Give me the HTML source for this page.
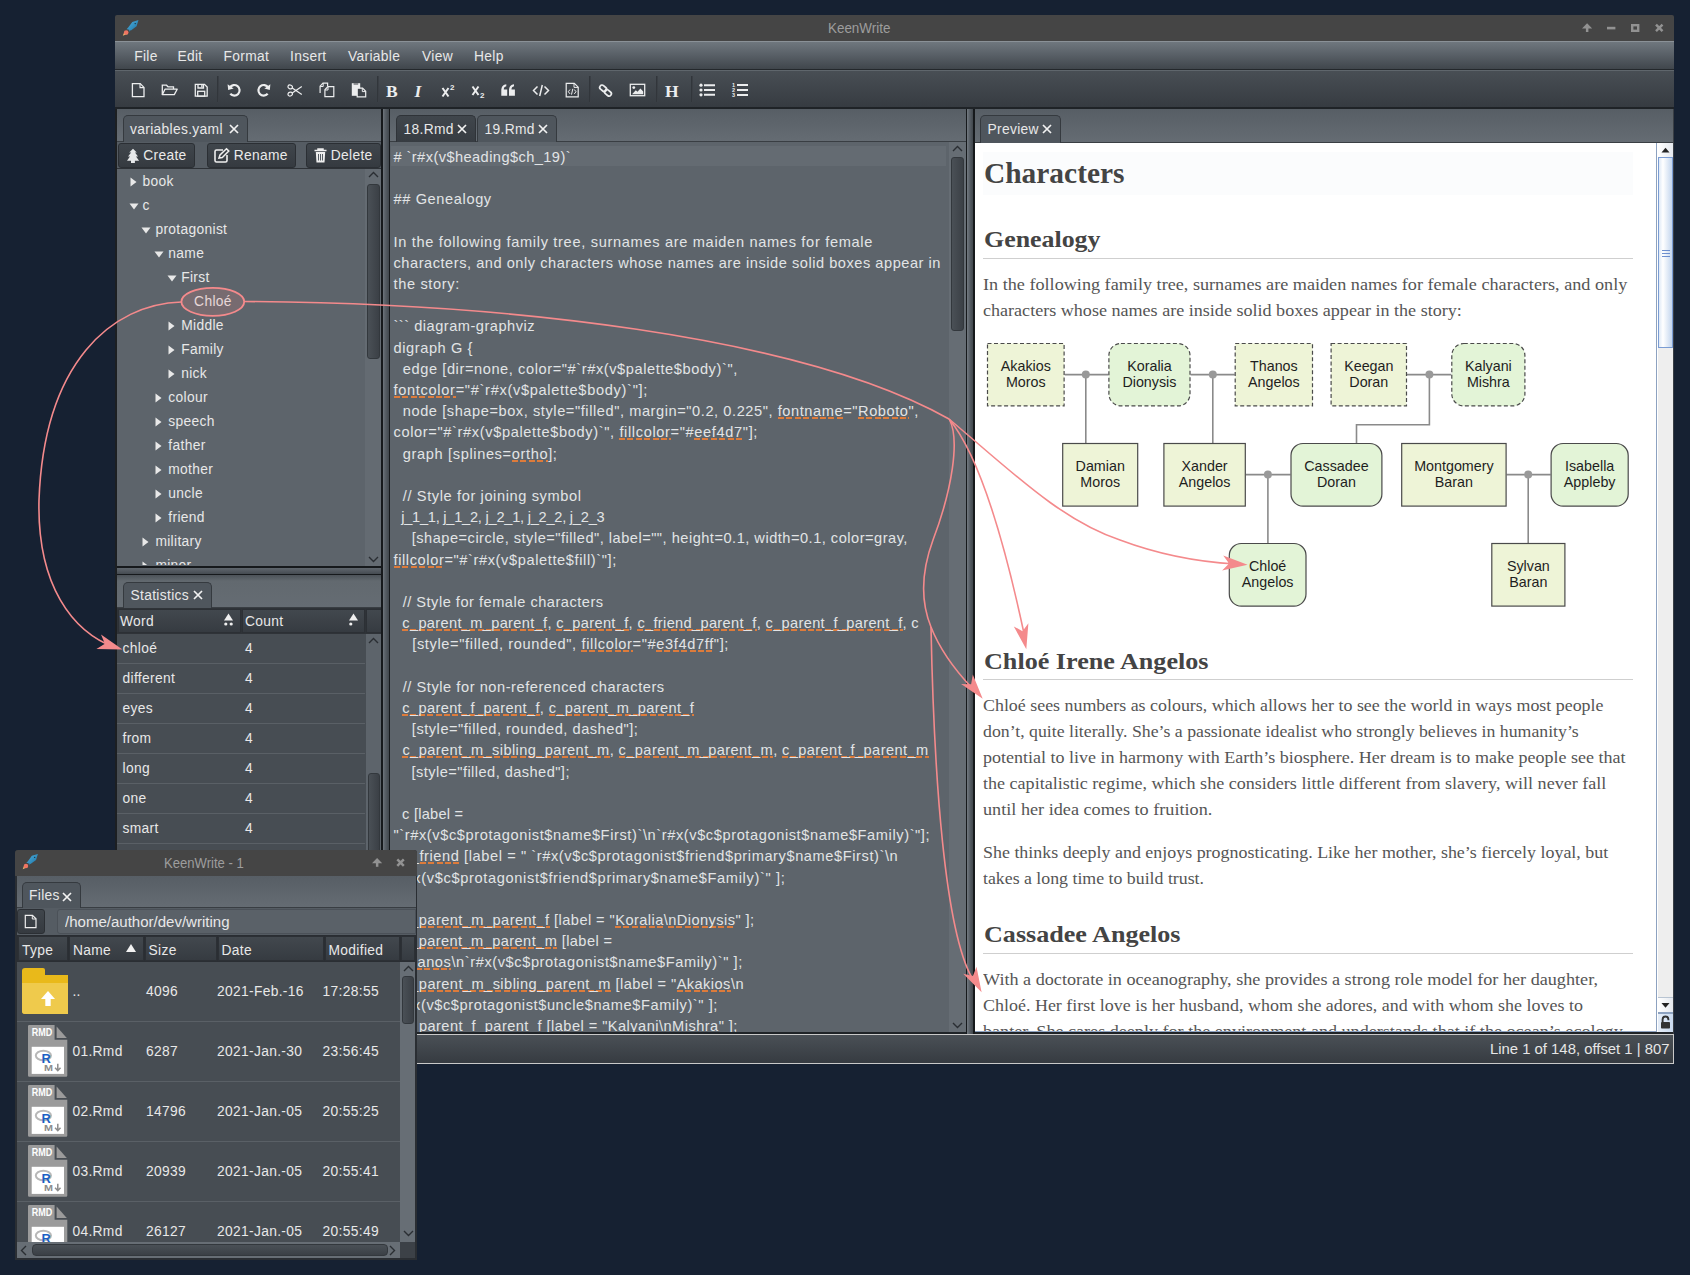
<!DOCTYPE html><html><head><meta charset="utf-8"><style>
*{margin:0;padding:0;box-sizing:border-box}
html,body{width:1690px;height:1275px;overflow:hidden;background:#162132;position:relative}
.a{position:absolute}
.t{position:absolute;white-space:pre;line-height:1}
.ed{font-family:"Liberation Sans",sans-serif;font-size:14.6px;color:#e2e4e6}
.u{background:repeating-linear-gradient(90deg,#dd7b3b 0 6px,transparent 6px 8.4px) 0 100%/100% 2px no-repeat}
svg{position:absolute;overflow:visible}
</style></head><body>
<div class="a" style="left:115px;top:15px;width:1559px;height:26px;background:#454545;border-radius:2px 2px 0 0"></div>
<div class="t" style="left:828.1px;top:21.15px;font-size:14px;color:#9d9d9d;font-family:'Liberation Sans',sans-serif;transform:scaleX(0.9584);transform-origin:0 0;">KeenWrite</div>
<svg style="left:118px;top:16px" width="24" height="22"><defs><linearGradient id="rg118" x1="0" y1="0" x2="1" y2="1"><stop offset="0" stop-color="#4fb3e3"/><stop offset="1" stop-color="#1a6f9f"/></linearGradient></defs><polygon points="6.50,15.50 4.80,19.80 8.50,18.20 9.50,18.50" fill="#f0b56a"/><circle cx="8.20" cy="16.50" r="2.30" fill="#f07563"/><polygon points="20.50,4.00 14.30,6.00 10.20,11.60 8.60,13.30 10.60,13.40 11.70,16.10 11.80,14.30 12.90,14.40 18.60,10.20" fill="url(#rg118)"/><circle cx="17.20" cy="7.60" r="0.70" fill="#1b2a33"/></svg>
<svg style="left:1578px;top:20px" width="92" height="16"><path d="M4 8.5L9.1 3.2L14.2 8.5Z" fill="#929292"/><rect x="7.9" y="7" width="2.5" height="5" fill="#929292"/><rect x="29" y="6.8" width="8.4" height="2.6" fill="#929292"/><rect x="54.2" y="5.2" width="6" height="5.6" stroke="#929292" stroke-width="2.4" fill="none"/><path d="M78 4.6L84.5 11.2M84.5 4.6L78 11.2" stroke="#929292" stroke-width="2.5"/></svg>
<div class="a" style="left:115px;top:41px;width:1559px;height:29px;background:linear-gradient(#6f777e,#5a6168 45%,#40464c);border-top:1px solid #8a9197;border-bottom:1px solid #24282c"></div>
<div class="t" style="left:134.2px;top:50.32px;font-size:13.8px;color:#e8e8e8;font-family:'Liberation Sans',sans-serif;letter-spacing:0.33px;">File</div>
<div class="t" style="left:177.4px;top:50.32px;font-size:13.8px;color:#e8e8e8;font-family:'Liberation Sans',sans-serif;letter-spacing:0.33px;">Edit</div>
<div class="t" style="left:223.5px;top:50.32px;font-size:13.8px;color:#e8e8e8;font-family:'Liberation Sans',sans-serif;letter-spacing:0.33px;">Format</div>
<div class="t" style="left:290px;top:50.32px;font-size:13.8px;color:#e8e8e8;font-family:'Liberation Sans',sans-serif;letter-spacing:0.33px;">Insert</div>
<div class="t" style="left:348px;top:50.32px;font-size:13.8px;color:#e8e8e8;font-family:'Liberation Sans',sans-serif;letter-spacing:0.33px;">Variable</div>
<div class="t" style="left:422px;top:50.32px;font-size:13.8px;color:#e8e8e8;font-family:'Liberation Sans',sans-serif;letter-spacing:0.33px;">View</div>
<div class="t" style="left:474px;top:50.32px;font-size:13.8px;color:#e8e8e8;font-family:'Liberation Sans',sans-serif;letter-spacing:0.33px;">Help</div>
<div class="a" style="left:115px;top:70px;width:1559px;height:38px;background:linear-gradient(#484e54,#363b41);border-top:1px solid #5f666c"></div>
<div class="a" style="left:115px;top:107px;width:1559px;height:2px;background:#1f2327"></div>
<div class="a" style="left:115px;top:109px;width:1559px;height:926px;background:#3a3f45;border-left:2px solid #1c1f22"></div>
<svg style="left:131px;top:82px" width="15" height="16" viewBox="0 0 15 16"><path d="M1.4 1.6H9.2L13 5.4V14.6H1.4Z" stroke="#ecedee" fill="none" stroke-width="1.3"/><path d="M9 1.6V5.6H13" stroke="#ecedee" fill="none" stroke-width="1.1"/></svg>
<svg style="left:161px;top:83px" width="18" height="14" viewBox="0 0 18 14"><path d="M1.3 11.5V2.2H5.5L7 3.8H12.5V6" stroke="#ecedee" fill="none" stroke-width="1.3"/><path d="M1.3 11.6L4 6.2H16.2L13.3 11.6Z" stroke="#ecedee" fill="none" stroke-width="1.3" stroke-linejoin="round"/></svg>
<svg style="left:194px;top:83px" width="15" height="15" viewBox="0 0 15 15"><path d="M1.3 1.3H10.5L13.2 4V13.2H1.3Z" stroke="#ecedee" fill="none" stroke-width="1.3"/><path d="M4 1.3V5H9.5V1.3" stroke="#ecedee" fill="none" stroke-width="1.3"/><rect x="3.7" y="8.3" width="7" height="4.9" stroke="#ecedee" fill="none" stroke-width="1.3"/><rect x="7.2" y="2" width="1.4" height="2.3" fill="#ecedee"/></svg>
<div class="a" style="left:217px;top:76px;width:2px;height:26px;background:linear-gradient(90deg,#2d3136,#3f444a)"></div>
<div class="a" style="left:377px;top:76px;width:2px;height:26px;background:linear-gradient(90deg,#2d3136,#3f444a)"></div>
<div class="a" style="left:589px;top:76px;width:2px;height:26px;background:linear-gradient(90deg,#2d3136,#3f444a)"></div>
<div class="a" style="left:656px;top:76px;width:2px;height:26px;background:linear-gradient(90deg,#2d3136,#3f444a)"></div>
<div class="a" style="left:691px;top:76px;width:2px;height:26px;background:linear-gradient(90deg,#2d3136,#3f444a)"></div>
<svg style="left:227px;top:83px" width="14" height="14" viewBox="0 0 14 14"><path d="M2.8 4.5A5.3 5.3 0 1 1 3.3 10.8" stroke="#ecedee" fill="none" stroke-width="2.2"/><path d="M0.6 1.2L1.2 7L6.6 5.4Z" fill="#ecedee"/></svg>
<svg style="left:257px;top:83px" width="14" height="14" viewBox="0 0 14 14"><path d="M11.2 4.5A5.3 5.3 0 1 0 10.7 10.8" stroke="#ecedee" fill="none" stroke-width="2.2"/><path d="M13.4 1.2L12.8 7L7.4 5.4Z" fill="#ecedee"/></svg>
<svg style="left:287px;top:84px" width="16" height="13" viewBox="0 0 16 13"><ellipse cx="3.2" cy="2.9" rx="2.3" ry="1.9" transform="rotate(25 3.2 2.9)" stroke="#ecedee" fill="none" stroke-width="1.2"/><ellipse cx="3.2" cy="10.1" rx="2.3" ry="1.9" transform="rotate(-25 3.2 10.1)" stroke="#ecedee" fill="none" stroke-width="1.2"/><path d="M5.2 4L14.8 10.5M5.2 9L14.8 2.5" stroke="#ecedee" fill="none" stroke-width="1.2"/></svg>
<svg style="left:319px;top:82px" width="16" height="16" viewBox="0 0 16 16"><path d="M1.1 11V4.2L4 1.1H8.6V4" stroke="#ecedee" fill="none" stroke-width="1.2"/><path d="M5.9 14.7V7.8L8.8 4.7H14.8V14.7Z" stroke="#ecedee" fill="none" stroke-width="1.2"/><path d="M1.2 4.5H4.2V1.2M6 8H9V5" stroke="#ecedee" fill="none" stroke-width="1"/></svg>
<svg style="left:351px;top:82px" width="16" height="16" viewBox="0 0 16 16"><rect x="0.8" y="1.2" width="8.4" height="12.6" fill="#ecedee"/><path d="M2.6 2H7.2" stroke="#3e4349" stroke-width="1"/><path d="M6.2 14.8V6.2H11.6L14.7 9.3V14.8Z" fill="#3e4349" stroke="#ecedee" stroke-width="1.2"/><path d="M11.3 6.2V9.6H14.7" stroke="#ecedee" fill="none" stroke-width="1"/></svg>
<div class="t" style="left:386px;top:82.84px;font-size:17.5px;color:#ecedee;font-family:'Liberation Serif',serif;font-weight:bold;">B</div>
<div class="t" style="left:414.5px;top:82.84px;font-size:17.5px;color:#ecedee;font-family:'Liberation Serif',serif;font-weight:bold;font-style:italic;">I</div>
<svg style="left:441px;top:82px" width="15" height="16" viewBox="0 0 15 16"><path d="M1.5 6L7.5 14.5M7.5 6L1.5 14.5" stroke="#ecedee" fill="none" stroke-width="2"/><text x="9" y="7.5" font-family="Liberation Sans" font-weight="bold" font-size="8" fill="#ecedee">2</text></svg>
<svg style="left:471px;top:82px" width="15" height="17" viewBox="0 0 15 17"><path d="M1.5 4.5L7.5 13M7.5 4.5L1.5 13" stroke="#ecedee" fill="none" stroke-width="2"/><text x="9" y="16" font-family="Liberation Sans" font-weight="bold" font-size="8" fill="#ecedee">2</text></svg>
<svg style="left:500px;top:83px" width="17" height="14" viewBox="0 0 17 14"><path d="M1.3 12.7V7.5C1.3 3.5 3.5 1.4 6.3 1.2V3.3C4.6 3.6 3.8 4.8 3.8 6.5H7.2V12.7Z" fill="#ecedee"/><path d="M9 12.7V7.5C9 3.5 11.2 1.4 14 1.2V3.3C12.3 3.6 11.5 4.8 11.5 6.5H14.9V12.7Z" fill="#ecedee"/></svg>
<svg style="left:532px;top:84px" width="18" height="13" viewBox="0 0 18 13"><path d="M5.5 2.5L1.5 6.5L5.5 10.5M12.5 2.5L16.5 6.5L12.5 10.5M10.3 1L7.7 12" stroke="#ecedee" fill="none" stroke-width="1.5"/></svg>
<svg style="left:565px;top:82px" width="15" height="16" viewBox="0 0 15 16"><path d="M1.2 1.3H9.3L13.2 5.2V14.8H1.2Z" stroke="#ecedee" fill="none" stroke-width="1.2"/><path d="M9 1.3V5.4H13.2" stroke="#ecedee" fill="none" stroke-width="1"/><path d="M5 7.5L3.3 9.7L5 11.9M9.3 7.5L11 9.7L9.3 11.9M7.8 6.8L6.5 12.6" stroke="#ecedee" fill="none" stroke-width="1"/></svg>
<svg style="left:598px;top:83px" width="16" height="15" viewBox="0 0 16 15"><rect x="1.4" y="3" width="7.5" height="4.6" rx="2.3" transform="rotate(40 5.1 5.3)" stroke="#ecedee" fill="none" stroke-width="1.7"/><rect x="6.2" y="7.5" width="7.5" height="4.6" rx="2.3" transform="rotate(40 9.9 9.8)" stroke="#ecedee" fill="none" stroke-width="1.7"/></svg>
<svg style="left:629px;top:83px" width="17" height="14" viewBox="0 0 17 14"><rect x="1.3" y="1.3" width="14.4" height="11.4" stroke="#ecedee" fill="none" stroke-width="1.3"/><circle cx="4.8" cy="4.6" r="1.4" fill="#ecedee"/><path d="M3 11.2L6.8 7.2L8.5 8.8L11.4 5.4L14.2 8.5V11.2Z" fill="#ecedee"/></svg>
<div class="t" style="left:665px;top:82.84px;font-size:17.5px;color:#ecedee;font-family:'Liberation Serif',serif;font-weight:bold;">H</div>
<svg style="left:699px;top:83px" width="17" height="14" viewBox="0 0 17 14"><circle cx="2" cy="2.2" r="1.6" fill="#ecedee"/><circle cx="2" cy="7" r="1.6" fill="#ecedee"/><circle cx="2" cy="11.8" r="1.6" fill="#ecedee"/><path d="M5 2.2H16M5 7H16M5 11.8H16" stroke="#ecedee" fill="none" stroke-width="2.1"/></svg>
<svg style="left:732px;top:82px" width="17" height="16" viewBox="0 0 17 16"><text x="0" y="5" font-family="Liberation Sans" font-size="5.5" font-weight="bold" fill="#ecedee">1</text><text x="0" y="10" font-family="Liberation Sans" font-size="5.5" font-weight="bold" fill="#ecedee">2</text><text x="0" y="15" font-family="Liberation Sans" font-size="5.5" font-weight="bold" fill="#ecedee">3</text><path d="M5 3H16M5 8H16M5 13H16" stroke="#ecedee" fill="none" stroke-width="2.1"/></svg>
<div class="a" style="left:115px;top:1034px;width:1559px;height:30px;background:linear-gradient(#4a5056,#363b41);border-top:1px solid #c9c9c9;border-right:1px solid #c9c9c9;border-bottom:1px solid #c9c9c9"></div>
<div class="t" style="left:1489.5px;top:1043.32px;font-size:13.8px;color:#e6e6e6;font-family:'Liberation Sans',sans-serif;transform:scaleX(1.0766);transform-origin:0 0;">Line 1 of 148, offset 1 | 807</div>
<div class="a" style="left:117px;top:109px;width:265px;height:33px;background:linear-gradient(#575e65,#656c73);border-bottom:1px solid #393e43"></div>
<div class="a" style="left:123px;top:115px;width:125px;height:27px;background:#4f565d;border:1px solid #353a3f;border-bottom:none;border-radius:5px 5px 0 0"></div>
<div class="t" style="left:130px;top:123.32px;font-size:13.8px;color:#e8e8e8;font-family:'Liberation Sans',sans-serif;letter-spacing:0.33px;">variables.yaml</div>
<svg style="left:228px;top:123px" width="12" height="12"><path d="M2 2L10 10M10 2L2 10" stroke="#f2f2f2" stroke-width="1.7"/></svg>
<div class="a" style="left:117px;top:142px;width:265px;height:27px;background:#555c63"></div>
<div class="a" style="left:118px;top:143px;width:77px;height:25px;background:linear-gradient(#40464c,#353a40);border:1px solid #2b2f34;border-radius:3px"></div>
<div class="t" style="left:143.2px;top:148.92px;font-size:13.8px;color:#eaeaea;font-family:'Liberation Sans',sans-serif;letter-spacing:0.33px;">Create</div>
<div class="a" style="left:207px;top:143px;width:89px;height:25px;background:linear-gradient(#40464c,#353a40);border:1px solid #2b2f34;border-radius:3px"></div>
<div class="t" style="left:233.7px;top:148.92px;font-size:13.8px;color:#eaeaea;font-family:'Liberation Sans',sans-serif;letter-spacing:0.33px;">Rename</div>
<div class="a" style="left:306px;top:143px;width:75px;height:25px;background:linear-gradient(#40464c,#353a40);border:1px solid #2b2f34;border-radius:3px"></div>
<div class="t" style="left:330.7px;top:148.92px;font-size:13.8px;color:#eaeaea;font-family:'Liberation Sans',sans-serif;letter-spacing:0.33px;">Delete</div>
<svg style="left:126px;top:148px" width="14" height="16"><path d="M7.0 0.8 L10.8 4.6 L9.0 4.6 L12.0 8.5 L10.0 8.5 L13.1 12.7 L8.9 12.7 L8.9 14.9 L5.0 14.9 L5.0 12.7 L1.0 12.7 L4.0 8.5 L2.0 8.5 L5.2 4.6 L3.2 4.6Z" fill="#e6e8ea"/></svg>
<svg style="left:214px;top:148px" width="16" height="15"><path d="M9 2H2.5C1.7 2 1 2.7 1 3.5V12.5C1 13.3 1.7 14 2.5 14H11.5C12.3 14 13 13.3 13 12.5V7" fill="none" stroke="#eee" stroke-width="1.6"/><path d="M5 10L6 7L12.5 0.8L14.8 3.1L8.3 9.5Z" fill="none" stroke="#eee" stroke-width="1.5"/></svg>
<svg style="left:314px;top:148px" width="13" height="15"><path d="M0.5 2.5H12.5M4 2.5V1H9V2.5" stroke="#eee" stroke-width="1.5" fill="none"/><path d="M1.8 4H11.2L10.5 14.5H2.5Z" fill="#eee"/><path d="M4.5 6V12.5M6.5 6V12.5M8.5 6V12.5" stroke="#555c63" stroke-width="1"/></svg>
<div class="a" style="left:117px;top:168px;width:265px;height:400px;background:#5d646b;border-top:1px solid #2e3237;border-bottom:2px solid #16191c"></div>
<div class="a" style="left:365px;top:169px;width:17px;height:397px;background:#646b72"></div>
<svg style="left:367px;top:170px" width="13" height="9"><path d="M2 7L6.5 2.5L11 7" stroke="#2a2e33" stroke-width="1.4" fill="none"/></svg>
<div class="a" style="left:367px;top:184px;width:13px;height:175px;background:linear-gradient(90deg,#4a5056,#3b4046);border:1px solid #33383d;border-radius:3px"></div>
<svg style="left:367px;top:555px" width="13" height="9"><path d="M2 2L6.5 6.5L11 2" stroke="#2a2e33" stroke-width="1.4" fill="none"/></svg>
<div class="a" style="left:117px;top:169px;width:248px;height:396px;overflow:hidden">
<div class="t" style="left:25.5px;top:6.02px;font-size:13.8px;color:#e8e8e8;font-family:'Liberation Sans',sans-serif;letter-spacing:0.33px;">book</div>
<svg style="left:12.5px;top:8.199999999999989px" width="8" height="10"><path d="M0.5 0.5L6.5 5L0.5 9.5Z" fill="#e8e8e8"/></svg>
<div class="t" style="left:25.5px;top:30.02px;font-size:13.8px;color:#e8e8e8;font-family:'Liberation Sans',sans-serif;letter-spacing:0.33px;">c</div>
<svg style="left:11.5px;top:33.69999999999999px" width="10" height="8"><path d="M0.5 0.5H9.5L5 6.5Z" fill="#e8e8e8"/></svg>
<div class="t" style="left:38.400000000000006px;top:54.02px;font-size:13.8px;color:#e8e8e8;font-family:'Liberation Sans',sans-serif;letter-spacing:0.33px;">protagonist</div>
<svg style="left:24.400000000000006px;top:57.69999999999999px" width="10" height="8"><path d="M0.5 0.5H9.5L5 6.5Z" fill="#e8e8e8"/></svg>
<div class="t" style="left:51.30000000000001px;top:78.02px;font-size:13.8px;color:#e8e8e8;font-family:'Liberation Sans',sans-serif;letter-spacing:0.33px;">name</div>
<svg style="left:37.30000000000001px;top:81.69999999999999px" width="10" height="8"><path d="M0.5 0.5H9.5L5 6.5Z" fill="#e8e8e8"/></svg>
<div class="t" style="left:64.19999999999999px;top:102.02px;font-size:13.8px;color:#e8e8e8;font-family:'Liberation Sans',sans-serif;letter-spacing:0.33px;">First</div>
<svg style="left:50.19999999999999px;top:105.69999999999999px" width="10" height="8"><path d="M0.5 0.5H9.5L5 6.5Z" fill="#e8e8e8"/></svg>
<div class="t" style="left:77.1px;top:126.02px;font-size:13.8px;color:#e8e8e8;font-family:'Liberation Sans',sans-serif;letter-spacing:0.33px;">Chloé</div>
<div class="t" style="left:64.19999999999999px;top:150.02px;font-size:13.8px;color:#e8e8e8;font-family:'Liberation Sans',sans-serif;letter-spacing:0.33px;">Middle</div>
<svg style="left:51.19999999999999px;top:152.2px" width="8" height="10"><path d="M0.5 0.5L6.5 5L0.5 9.5Z" fill="#e8e8e8"/></svg>
<div class="t" style="left:64.19999999999999px;top:174.02px;font-size:13.8px;color:#e8e8e8;font-family:'Liberation Sans',sans-serif;letter-spacing:0.33px;">Family</div>
<svg style="left:51.19999999999999px;top:176.2px" width="8" height="10"><path d="M0.5 0.5L6.5 5L0.5 9.5Z" fill="#e8e8e8"/></svg>
<div class="t" style="left:64.19999999999999px;top:198.02px;font-size:13.8px;color:#e8e8e8;font-family:'Liberation Sans',sans-serif;letter-spacing:0.33px;">nick</div>
<svg style="left:51.19999999999999px;top:200.2px" width="8" height="10"><path d="M0.5 0.5L6.5 5L0.5 9.5Z" fill="#e8e8e8"/></svg>
<div class="t" style="left:51.30000000000001px;top:222.02px;font-size:13.8px;color:#e8e8e8;font-family:'Liberation Sans',sans-serif;letter-spacing:0.33px;">colour</div>
<svg style="left:38.30000000000001px;top:224.2px" width="8" height="10"><path d="M0.5 0.5L6.5 5L0.5 9.5Z" fill="#e8e8e8"/></svg>
<div class="t" style="left:51.30000000000001px;top:246.02px;font-size:13.8px;color:#e8e8e8;font-family:'Liberation Sans',sans-serif;letter-spacing:0.33px;">speech</div>
<svg style="left:38.30000000000001px;top:248.2px" width="8" height="10"><path d="M0.5 0.5L6.5 5L0.5 9.5Z" fill="#e8e8e8"/></svg>
<div class="t" style="left:51.30000000000001px;top:270.02px;font-size:13.8px;color:#e8e8e8;font-family:'Liberation Sans',sans-serif;letter-spacing:0.33px;">father</div>
<svg style="left:38.30000000000001px;top:272.2px" width="8" height="10"><path d="M0.5 0.5L6.5 5L0.5 9.5Z" fill="#e8e8e8"/></svg>
<div class="t" style="left:51.30000000000001px;top:294.02px;font-size:13.8px;color:#e8e8e8;font-family:'Liberation Sans',sans-serif;letter-spacing:0.33px;">mother</div>
<svg style="left:38.30000000000001px;top:296.2px" width="8" height="10"><path d="M0.5 0.5L6.5 5L0.5 9.5Z" fill="#e8e8e8"/></svg>
<div class="t" style="left:51.30000000000001px;top:318.02px;font-size:13.8px;color:#e8e8e8;font-family:'Liberation Sans',sans-serif;letter-spacing:0.33px;">uncle</div>
<svg style="left:38.30000000000001px;top:320.2px" width="8" height="10"><path d="M0.5 0.5L6.5 5L0.5 9.5Z" fill="#e8e8e8"/></svg>
<div class="t" style="left:51.30000000000001px;top:342.02px;font-size:13.8px;color:#e8e8e8;font-family:'Liberation Sans',sans-serif;letter-spacing:0.33px;">friend</div>
<svg style="left:38.30000000000001px;top:344.20000000000005px" width="8" height="10"><path d="M0.5 0.5L6.5 5L0.5 9.5Z" fill="#e8e8e8"/></svg>
<div class="t" style="left:38.400000000000006px;top:366.02px;font-size:13.8px;color:#e8e8e8;font-family:'Liberation Sans',sans-serif;letter-spacing:0.33px;">military</div>
<svg style="left:25.400000000000006px;top:368.20000000000005px" width="8" height="10"><path d="M0.5 0.5L6.5 5L0.5 9.5Z" fill="#e8e8e8"/></svg>
<div class="t" style="left:38.400000000000006px;top:390.02px;font-size:13.8px;color:#e8e8e8;font-family:'Liberation Sans',sans-serif;letter-spacing:0.33px;">minor</div>
<svg style="left:25.400000000000006px;top:392.20000000000005px" width="8" height="10"><path d="M0.5 0.5L6.5 5L0.5 9.5Z" fill="#e8e8e8"/></svg>
</div>
<div class="a" style="left:117px;top:568px;width:265px;height:7px;background:linear-gradient(#5f666d,#454b51);border-bottom:1px solid #16191c"></div>
<div class="a" style="left:117px;top:575px;width:265px;height:33px;background:linear-gradient(#4c5258,#62696f 6px,#656c73);border-bottom:1px solid #393e43"></div>
<div class="a" style="left:123px;top:582px;width:89px;height:26px;background:#4f565d;border:1px solid #353a3f;border-bottom:none;border-radius:5px 5px 0 0"></div>
<div class="t" style="left:130.5px;top:589.32px;font-size:13.8px;color:#e8e8e8;font-family:'Liberation Sans',sans-serif;letter-spacing:0.33px;">Statistics</div>
<svg style="left:192px;top:589px" width="12" height="12"><path d="M2 2L10 10M10 2L2 10" stroke="#f2f2f2" stroke-width="1.7"/></svg>
<div class="a" style="left:117px;top:608px;width:265px;height:26px;background:#2f3338"></div>
<div class="a" style="left:118px;top:609px;width:123px;height:24px;background:linear-gradient(#42484e,#363b41);border:1px solid #2c3035"></div>
<div class="a" style="left:242px;top:609px;width:123px;height:24px;background:linear-gradient(#42484e,#363b41);border:1px solid #2c3035"></div>
<div class="a" style="left:366px;top:609px;width:16px;height:24px;background:linear-gradient(#42484e,#363b41);border:1px solid #2c3035"></div>
<div class="t" style="left:120px;top:614.82px;font-size:13.8px;color:#e8e8e8;font-family:'Liberation Sans',sans-serif;letter-spacing:0.33px;">Word</div>
<div class="t" style="left:245px;top:614.82px;font-size:13.8px;color:#e8e8e8;font-family:'Liberation Sans',sans-serif;letter-spacing:0.33px;">Count</div>
<svg style="left:223px;top:613px" width="11" height="14"><path d="M5.5 0.5L10 7.5H1Z" fill="#f0f0f0"/><circle cx="2.8" cy="11" r="1.6" fill="#f0f0f0"/><circle cx="8.2" cy="11" r="1.6" fill="#f0f0f0"/></svg>
<svg style="left:348px;top:613px" width="11" height="14"><path d="M5.5 0.5L10 7.5H1Z" fill="#f0f0f0"/><circle cx="2.8" cy="11" r="1.6" fill="#f0f0f0"/></svg>
<div class="a" style="left:117px;top:634px;width:265px;height:216px;background:#474d53"></div>
<div class="a" style="left:117px;top:663px;width:248px;height:1px;background:#5a6066"></div>
<div class="t" style="left:122.5px;top:642.32px;font-size:13.8px;color:#e8e8e8;font-family:'Liberation Sans',sans-serif;letter-spacing:0.33px;">chloé</div>
<div class="t" style="left:245px;top:642.32px;font-size:13.8px;color:#e8e8e8;font-family:'Liberation Sans',sans-serif;letter-spacing:0.33px;">4</div>
<div class="a" style="left:117px;top:693px;width:248px;height:1px;background:#5a6066"></div>
<div class="t" style="left:122.5px;top:672.32px;font-size:13.8px;color:#e8e8e8;font-family:'Liberation Sans',sans-serif;letter-spacing:0.33px;">different</div>
<div class="t" style="left:245px;top:672.32px;font-size:13.8px;color:#e8e8e8;font-family:'Liberation Sans',sans-serif;letter-spacing:0.33px;">4</div>
<div class="a" style="left:117px;top:723px;width:248px;height:1px;background:#5a6066"></div>
<div class="t" style="left:122.5px;top:702.32px;font-size:13.8px;color:#e8e8e8;font-family:'Liberation Sans',sans-serif;letter-spacing:0.33px;">eyes</div>
<div class="t" style="left:245px;top:702.32px;font-size:13.8px;color:#e8e8e8;font-family:'Liberation Sans',sans-serif;letter-spacing:0.33px;">4</div>
<div class="a" style="left:117px;top:753px;width:248px;height:1px;background:#5a6066"></div>
<div class="t" style="left:122.5px;top:732.32px;font-size:13.8px;color:#e8e8e8;font-family:'Liberation Sans',sans-serif;letter-spacing:0.33px;">from</div>
<div class="t" style="left:245px;top:732.32px;font-size:13.8px;color:#e8e8e8;font-family:'Liberation Sans',sans-serif;letter-spacing:0.33px;">4</div>
<div class="a" style="left:117px;top:783px;width:248px;height:1px;background:#5a6066"></div>
<div class="t" style="left:122.5px;top:762.32px;font-size:13.8px;color:#e8e8e8;font-family:'Liberation Sans',sans-serif;letter-spacing:0.33px;">long</div>
<div class="t" style="left:245px;top:762.32px;font-size:13.8px;color:#e8e8e8;font-family:'Liberation Sans',sans-serif;letter-spacing:0.33px;">4</div>
<div class="a" style="left:117px;top:813px;width:248px;height:1px;background:#5a6066"></div>
<div class="t" style="left:122.5px;top:792.32px;font-size:13.8px;color:#e8e8e8;font-family:'Liberation Sans',sans-serif;letter-spacing:0.33px;">one</div>
<div class="t" style="left:245px;top:792.32px;font-size:13.8px;color:#e8e8e8;font-family:'Liberation Sans',sans-serif;letter-spacing:0.33px;">4</div>
<div class="a" style="left:117px;top:843px;width:248px;height:1px;background:#5a6066"></div>
<div class="t" style="left:122.5px;top:822.32px;font-size:13.8px;color:#e8e8e8;font-family:'Liberation Sans',sans-serif;letter-spacing:0.33px;">smart</div>
<div class="t" style="left:245px;top:822.32px;font-size:13.8px;color:#e8e8e8;font-family:'Liberation Sans',sans-serif;letter-spacing:0.33px;">4</div>
<div class="a" style="left:117px;top:873px;width:248px;height:1px;background:#5a6066"></div>
<div class="t" style="left:122.5px;top:852.32px;font-size:13.8px;color:#e8e8e8;font-family:'Liberation Sans',sans-serif;letter-spacing:0.33px;">very</div>
<div class="t" style="left:245px;top:852.32px;font-size:13.8px;color:#e8e8e8;font-family:'Liberation Sans',sans-serif;letter-spacing:0.33px;">4</div>
<div class="a" style="left:366px;top:634px;width:16px;height:216px;background:#5d646b"></div>
<svg style="left:367px;top:636px" width="13" height="9"><path d="M2 7L6.5 2.5L11 7" stroke="#2a2e33" stroke-width="1.4" fill="none"/></svg>
<div class="a" style="left:368px;top:773px;width:12px;height:80px;background:linear-gradient(90deg,#4a5056,#3b4046);border:1px solid #33383d;border-radius:3px"></div>
<div class="a" style="left:381px;top:109px;width:9px;height:925px;background:linear-gradient(90deg,#16191c 0 2px,#6e757c 2px,#596067 4px,#41474d 8px,#16191c 8px 9px)"></div>
<div class="a" style="left:390px;top:109px;width:576px;height:33px;background:linear-gradient(#575e65,#656c73);border-bottom:1px solid #393e43"></div>
<div class="a" style="left:396px;top:115px;width:80px;height:27px;background:linear-gradient(#40464c,#373c42);border:1px solid #2f3338;border-bottom:none;border-radius:5px 5px 0 0"></div>
<div class="t" style="left:403.5px;top:123.32px;font-size:13.8px;color:#e8e8e8;font-family:'Liberation Sans',sans-serif;letter-spacing:0.33px;">18.Rmd</div>
<svg style="left:456px;top:123px" width="12" height="12"><path d="M2 2L10 10M10 2L2 10" stroke="#f2f2f2" stroke-width="1.7"/></svg>
<div class="a" style="left:477px;top:115px;width:80px;height:27px;background:#4f565d;border:1px solid #353a3f;border-bottom:none;border-radius:5px 5px 0 0"></div>
<div class="t" style="left:484.5px;top:123.32px;font-size:13.8px;color:#e8e8e8;font-family:'Liberation Sans',sans-serif;letter-spacing:0.33px;">19.Rmd</div>
<svg style="left:537px;top:123px" width="12" height="12"><path d="M2 2L10 10M10 2L2 10" stroke="#f2f2f2" stroke-width="1.7"/></svg>
<div class="a" style="left:390px;top:142px;width:576px;height:891px;background:#5d646b"></div>
<div class="a" style="left:391px;top:146px;width:555px;height:20px;background:#646b72"></div>
<div class="a" style="left:949px;top:142px;width:17px;height:891px;background:#666d74"></div>
<svg style="left:951px;top:144px" width="13" height="9"><path d="M2 7L6.5 2.5L11 7" stroke="#2a2e33" stroke-width="1.4" fill="none"/></svg>
<div class="a" style="left:951px;top:157px;width:13px;height:174px;background:linear-gradient(90deg,#4a5056,#3b4046);border:1px solid #33383d;border-radius:3px"></div>
<svg style="left:951px;top:1021px" width="13" height="9"><path d="M2 2L6.5 6.5L11 2" stroke="#2a2e33" stroke-width="1.4" fill="none"/></svg>
<div class="a" style="left:391px;top:142px;width:558px;height:891px;overflow:hidden">
<div class="t ed" style="left:2.5px;top:7.70px;letter-spacing:0.432px"># `r#x(v$heading$ch_19)`</div>
<div class="t ed" style="left:2.5px;top:50.10px;letter-spacing:0.617px">## Genealogy</div>
<div class="t ed" style="left:2.5px;top:92.50px;letter-spacing:0.678px">In the following family tree, surnames are maiden names for female</div>
<div class="t ed" style="left:2.5px;top:113.70px;letter-spacing:0.533px">characters, and only characters whose names are inside solid boxes appear in</div>
<div class="t ed" style="left:2.5px;top:134.90px;letter-spacing:0.637px">the story:</div>
<div class="t ed" style="left:2.5px;top:177.30px;letter-spacing:0.510px">``` diagram-graphviz</div>
<div class="t ed" style="left:2.5px;top:198.50px;letter-spacing:0.588px">digraph G {</div>
<div class="t ed" style="left:2.5px;top:219.70px;letter-spacing:0.590px">  edge [dir=none, color="#`r#x(v$palette$body)`",</div>
<div class="t ed" style="left:2.5px;top:240.90px;letter-spacing:0.686px"><span class="u">fontcolor</span>="#`r#x(v$palette$body)`"];</div>
<div class="t ed" style="left:2.5px;top:262.10px;letter-spacing:0.573px">  node [shape=box, style="filled", margin="0.2, 0.225", <span class="u">fontname</span>="<span class="u">Roboto</span>",</div>
<div class="t ed" style="left:2.5px;top:283.30px;letter-spacing:0.639px">color="#`r#x(v$palette$body)`", <span class="u">fillcolor</span>="#<span class="u">eef4d7</span>"];</div>
<div class="t ed" style="left:2.5px;top:304.50px;letter-spacing:0.630px">  graph [splines=<span class="u">ortho</span>];</div>
<div class="t ed" style="left:2.5px;top:346.90px;letter-spacing:0.612px">  // Style for joining symbol</div>
<div class="t ed" style="left:2.5px;top:368.10px;letter-spacing:-0.234px">  j_1_1, j_1_2, j_2_1, j_2_2, j_2_3</div>
<div class="t ed" style="left:2.5px;top:389.30px;letter-spacing:0.502px">    [shape=circle, style="filled", label="", height=0.1, width=0.1, color=gray,</div>
<div class="t ed" style="left:2.5px;top:410.50px;letter-spacing:0.609px"><span class="u">fillcolor</span>="#`r#x(v$palette$fill)`"];</div>
<div class="t ed" style="left:2.5px;top:452.90px;letter-spacing:0.508px">  // Style for female characters</div>
<div class="t ed" style="left:2.5px;top:474.10px;letter-spacing:0.337px">  <span class="u">c_parent_m_parent_f</span>, <span class="u">c_parent_f</span>, <span class="u">c_friend_parent_f</span>, <span class="u">c_parent_f_parent_f</span>, c</div>
<div class="t ed" style="left:2.5px;top:495.30px;letter-spacing:0.633px">    [style="filled, rounded", <span class="u">fillcolor</span>="#<span class="u">e3f4d7ff</span>"];</div>
<div class="t ed" style="left:2.5px;top:537.70px;letter-spacing:0.554px">  // Style for non-referenced characters</div>
<div class="t ed" style="left:2.5px;top:558.90px;letter-spacing:0.360px">  <span class="u">c_parent_f_parent_f</span>, <span class="u">c_parent_m_parent_f</span></div>
<div class="t ed" style="left:2.5px;top:580.10px;letter-spacing:0.525px">    [style="filled, rounded, dashed"];</div>
<div class="t ed" style="left:2.5px;top:601.30px;letter-spacing:0.405px">  <span class="u">c_parent_m_sibling_parent_m</span>, <span class="u">c_parent_m_parent_m</span>, <span class="u">c_parent_f_parent_m</span></div>
<div class="t ed" style="left:2.5px;top:622.50px;letter-spacing:0.452px">    [style="filled, dashed"];</div>
<div class="t ed" style="left:2.5px;top:664.90px;letter-spacing:0.247px">  c [label =</div>
<div class="t ed" style="left:2.5px;top:686.10px;letter-spacing:0.599px">"`r#x(v$c$protagonist$name$First)`\n`r#x(v$c$protagonist$name$Family)`"];</div>
<div class="t ed" style="left:2.5px;top:707.30px;letter-spacing:0.591px">  <span class="u">c_friend</span> [label = " `r#x(v$c$protagonist$friend$primary$name$First)`\n</div>
<div class="t ed" style="left:2.5px;top:728.50px;letter-spacing:0.655px">`r#x(v$c$protagonist$friend$primary$name$Family)`" ];</div>
<div class="t ed" style="left:2.5px;top:770.90px;letter-spacing:0.440px">  <span class="u">c_parent_m_parent_f</span> [label = "<span class="u">Koralia</span>\<span class="u">nDionysis</span>" ];</div>
<div class="t ed" style="left:2.5px;top:792.10px;letter-spacing:0.418px">  <span class="u">c_parent_m_parent_m</span> [label =</div>
<div class="t ed" style="left:2.5px;top:813.30px;letter-spacing:0.585px">"<span class="u">Thanos</span>\n`r#x(v$c$protagonist$name$Family)`" ];</div>
<div class="t ed" style="left:2.5px;top:834.50px;letter-spacing:0.448px">  <span class="u">c_parent_m_sibling_parent_m</span> [label = "<span class="u">Akakios</span>\n</div>
<div class="t ed" style="left:2.5px;top:855.70px;letter-spacing:0.584px">`r#x(v$c$protagonist$uncle$name$Family)`" ];</div>
<div class="t ed" style="left:2.5px;top:876.90px;letter-spacing:0.463px">  <span class="u">c_parent_f_parent_f</span> [label = "<span class="u">Kalyani</span>\<span class="u">nMishra</span>" ];</div>
</div>
<div class="a" style="left:390px;top:1032px;width:576px;height:2px;background:#1f2327"></div>
<div class="a" style="left:966px;top:109px;width:9px;height:925px;background:linear-gradient(90deg,#16191c 0 1.5px,#6e757c 1.5px,#596067 3.5px,#41474d 7px,#16191c 7px 9px)"></div>
<div class="a" style="left:975px;top:109px;width:698px;height:34px;background:linear-gradient(#575e65,#656c73);border-bottom:1px solid #393e43"></div>
<div class="a" style="left:980px;top:115px;width:81px;height:28px;background:#4f565d;border:1px solid #353a3f;border-bottom:none;border-radius:5px 5px 0 0"></div>
<div class="t" style="left:987.5px;top:123.32px;font-size:13.8px;color:#e8e8e8;font-family:'Liberation Sans',sans-serif;letter-spacing:0.33px;">Preview</div>
<svg style="left:1041px;top:123px" width="12" height="12"><path d="M2 2L10 10M10 2L2 10" stroke="#f2f2f2" stroke-width="1.7"/></svg>
<div class="a" style="left:975px;top:143px;width:683px;height:890px;background:#ffffff"></div>
<div class="a" style="left:1656px;top:143px;width:1px;height:889px;background:#8da2c0"></div>
<div class="a" style="left:975px;top:1031px;width:682px;height:1px;background:#8da2c0"></div>
<div class="a" style="left:975px;top:1032px;width:698px;height:2px;background:#1f2327"></div>
<div class="a" style="left:983px;top:152px;width:650px;height:43px;background:#fbfcfd"></div>
<div class="a" style="left:1658px;top:143px;width:15px;height:889px;background:#eeeeee"></div>
<div class="a" style="left:1658px;top:143px;width:15px;height:15px;background:linear-gradient(90deg,#ffffff,#e4e8ee);border-bottom:1px solid #b8c4d2"></div>
<svg style="left:1660px;top:146px" width="11" height="9"><path d="M5.5 1.8L9.5 6.5H1.5Z" fill="#222"/></svg>
<div class="a" style="left:1658px;top:157px;width:15px;height:191px;background:linear-gradient(90deg,#dfe9f6,#ffffff 30%,#c4d6ee);border:1px solid #7a9cd3"></div>
<div class="a" style="left:1662px;top:250px;width:8px;height:1px;background:#6d8fcf"></div>
<div class="a" style="left:1662px;top:253px;width:8px;height:1px;background:#6d8fcf"></div>
<div class="a" style="left:1662px;top:256px;width:8px;height:1px;background:#6d8fcf"></div>
<div class="a" style="left:1658px;top:997px;width:15px;height:15px;background:linear-gradient(90deg,#ffffff,#e4e8ee);border-top:1px solid #b8c4d2"></div>
<svg style="left:1660px;top:1001px" width="11" height="9"><path d="M1.5 2H9.5L5.5 6.8Z" fill="#222"/></svg>
<div class="a" style="left:1658px;top:1012px;width:15px;height:20px;background:linear-gradient(90deg,#e6eef8,#c9daf0);border-top:2px solid #8da2c0"></div>
<svg style="left:1660px;top:1015px" width="11" height="15"><path d="M2.6 7V4.4A2.9 2.9 0 0 1 8.4 4.4V5.2" stroke="#333" stroke-width="1.9" fill="none"/><rect x="1" y="7" width="9" height="6.5" rx="0.8" fill="#333"/></svg>
<div class="a" style="left:975px;top:143px;width:681px;height:888px;overflow:hidden">
<div class="t" style="left:8.5px;top:15.91px;font-size:29px;color:#444444;font-family:'Liberation Serif',serif;font-weight:bold;transform:scaleX(1.0143);transform-origin:0 0;">Characters</div>
<div class="t" style="left:8.5px;top:85.24px;font-size:23px;color:#444444;font-family:'Liberation Serif',serif;font-weight:bold;transform:scaleX(1.1256);transform-origin:0 0;">Genealogy</div>
<div class="t" style="left:8.5px;top:506.72px;font-size:23.5px;color:#444444;font-family:'Liberation Serif',serif;font-weight:bold;transform:scaleX(1.1117);transform-origin:0 0;">Chloé Irene Angelos</div>
<div class="t" style="left:8.5px;top:779.92px;font-size:23.5px;color:#444444;font-family:'Liberation Serif',serif;font-weight:bold;transform:scaleX(1.1107);transform-origin:0 0;">Cassadee Angelos</div>
<div class="a" style="left:8px;top:115px;width:650px;height:1px;background:#cfcfcf"></div>
<div class="a" style="left:8px;top:536px;width:650px;height:1px;background:#cfcfcf"></div>
<div class="a" style="left:8px;top:810px;width:650px;height:1px;background:#cfcfcf"></div>
<div class="t" style="left:7.7000000000000455px;top:134.18px;font-size:16.5px;color:#555555;font-family:'Liberation Serif',serif;transform:scaleX(1.1012);transform-origin:0 0;">In the following family tree, surnames are maiden names for female characters, and only</div>
<div class="t" style="left:7.7000000000000455px;top:159.88px;font-size:16.5px;color:#555555;font-family:'Liberation Serif',serif;transform:scaleX(1.0954);transform-origin:0 0;">characters whose names are inside solid boxes appear in the story:</div>
<div class="t" style="left:7.7000000000000455px;top:555.48px;font-size:16.5px;color:#555555;font-family:'Liberation Serif',serif;transform:scaleX(1.0850);transform-origin:0 0;">Chloé sees numbers as colours, which allows her to see the world in ways most people</div>
<div class="t" style="left:7.7000000000000455px;top:581.48px;font-size:16.5px;color:#555555;font-family:'Liberation Serif',serif;transform:scaleX(1.0762);transform-origin:0 0;">don’t, quite literally. She’s a passionate idealist who strongly believes in humanity’s</div>
<div class="t" style="left:7.7000000000000455px;top:607.48px;font-size:16.5px;color:#555555;font-family:'Liberation Serif',serif;transform:scaleX(1.0920);transform-origin:0 0;">potential to live in harmony with Earth’s biosphere. Her dream is to make people see that</div>
<div class="t" style="left:7.7000000000000455px;top:633.48px;font-size:16.5px;color:#555555;font-family:'Liberation Serif',serif;transform:scaleX(1.0944);transform-origin:0 0;">the capitalistic regime, which she considers little different from slavery, will never fall</div>
<div class="t" style="left:7.7000000000000455px;top:659.48px;font-size:16.5px;color:#555555;font-family:'Liberation Serif',serif;transform:scaleX(1.1022);transform-origin:0 0;">until her idea comes to fruition.</div>
<div class="t" style="left:7.7000000000000455px;top:701.58px;font-size:16.5px;color:#555555;font-family:'Liberation Serif',serif;transform:scaleX(1.0867);transform-origin:0 0;">She thinks deeply and enjoys prognosticating. Like her mother, she’s fiercely loyal, but</div>
<div class="t" style="left:7.7000000000000455px;top:727.58px;font-size:16.5px;color:#555555;font-family:'Liberation Serif',serif;transform:scaleX(1.0788);transform-origin:0 0;">takes a long time to build trust.</div>
<div class="t" style="left:7.7000000000000455px;top:829.38px;font-size:16.5px;color:#555555;font-family:'Liberation Serif',serif;transform:scaleX(1.1004);transform-origin:0 0;">With a doctorate in oceanography, she provides a strong role model for her daughter,</div>
<div class="t" style="left:7.7000000000000455px;top:855.38px;font-size:16.5px;color:#555555;font-family:'Liberation Serif',serif;transform:scaleX(1.0891);transform-origin:0 0;">Chloé. Her first love is her husband, whom she adores, and with whom she loves to</div>
<div class="t" style="left:7.7000000000000455px;top:881.38px;font-size:16.5px;color:#555555;font-family:'Liberation Serif',serif;transform:scaleX(1.0976);transform-origin:0 0;">banter. She cares deeply for the environment and understands that if the ocean’s ecology</div>
</div>
<svg style="left:0;top:0" width="1690" height="1275"><path d="M1064.6 374.6H1108.4" stroke="#8a8a8a" stroke-width="1.6" fill="none"/><path d="M1085.8 374.6V443" stroke="#8a8a8a" stroke-width="1.6" fill="none"/><path d="M1190.5 374.6H1234.7" stroke="#8a8a8a" stroke-width="1.6" fill="none"/><path d="M1212.8 374.6V443" stroke="#8a8a8a" stroke-width="1.6" fill="none"/><path d="M1245.8 474.6H1290.5" stroke="#8a8a8a" stroke-width="1.6" fill="none"/><path d="M1267.9 474.6V543" stroke="#8a8a8a" stroke-width="1.6" fill="none"/><path d="M1407 374.6H1451.3" stroke="#8a8a8a" stroke-width="1.6" fill="none"/><path d="M1429.4 374.6V424.7H1356.5V443" stroke="#8a8a8a" stroke-width="1.6" fill="none"/><path d="M1506.6 474.6H1550.6" stroke="#8a8a8a" stroke-width="1.6" fill="none"/><path d="M1528.2 474.6V543" stroke="#8a8a8a" stroke-width="1.6" fill="none"/><circle cx="1085.8" cy="374.6" r="4" fill="#999999"/><circle cx="1212.8" cy="374.6" r="4" fill="#999999"/><circle cx="1267.9" cy="474.6" r="4" fill="#999999"/><circle cx="1429.4" cy="374.6" r="4" fill="#999999"/><circle cx="1528.2" cy="474.6" r="4" fill="#999999"/><rect x="987.5" y="343.5" width="76.59999999999991" height="62.39999999999998" rx="0" fill="#eef4d7" stroke="#4a4a4a" stroke-width="1.2" stroke-dasharray="4 2.5"/><text x="1025.8" y="371" text-anchor="middle" font-family="Liberation Sans" font-size="14.3" fill="#1e1e1e">Akakios</text><text x="1025.8" y="386.5" text-anchor="middle" font-family="Liberation Sans" font-size="14.3" fill="#1e1e1e">Moros</text><rect x="1108.9" y="343.5" width="81.09999999999991" height="62.39999999999998" rx="12" fill="#e3f4d7" stroke="#4a4a4a" stroke-width="1.2" stroke-dasharray="4 2.5"/><text x="1149.45" y="371" text-anchor="middle" font-family="Liberation Sans" font-size="14.3" fill="#1e1e1e">Koralia</text><text x="1149.45" y="386.5" text-anchor="middle" font-family="Liberation Sans" font-size="14.3" fill="#1e1e1e">Dionysis</text><rect x="1235.2" y="343.5" width="77.29999999999995" height="62.39999999999998" rx="0" fill="#eef4d7" stroke="#4a4a4a" stroke-width="1.2" stroke-dasharray="4 2.5"/><text x="1273.85" y="371" text-anchor="middle" font-family="Liberation Sans" font-size="14.3" fill="#1e1e1e">Thanos</text><text x="1273.85" y="386.5" text-anchor="middle" font-family="Liberation Sans" font-size="14.3" fill="#1e1e1e">Angelos</text><rect x="1331.1" y="343.5" width="75.40000000000009" height="62.39999999999998" rx="0" fill="#eef4d7" stroke="#4a4a4a" stroke-width="1.2" stroke-dasharray="4 2.5"/><text x="1368.8" y="371" text-anchor="middle" font-family="Liberation Sans" font-size="14.3" fill="#1e1e1e">Keegan</text><text x="1368.8" y="386.5" text-anchor="middle" font-family="Liberation Sans" font-size="14.3" fill="#1e1e1e">Doran</text><rect x="1451.8" y="343.5" width="73.10000000000014" height="62.39999999999998" rx="12" fill="#e3f4d7" stroke="#4a4a4a" stroke-width="1.2" stroke-dasharray="4 2.5"/><text x="1488.35" y="371" text-anchor="middle" font-family="Liberation Sans" font-size="14.3" fill="#1e1e1e">Kalyani</text><text x="1488.35" y="386.5" text-anchor="middle" font-family="Liberation Sans" font-size="14.3" fill="#1e1e1e">Mishra</text><rect x="1062.7" y="443.5" width="75.0" height="62.60000000000002" rx="0" fill="#eef4d7" stroke="#4a4a4a" stroke-width="1.2" /><text x="1100.2" y="471" text-anchor="middle" font-family="Liberation Sans" font-size="14.3" fill="#1e1e1e">Damian</text><text x="1100.2" y="486.5" text-anchor="middle" font-family="Liberation Sans" font-size="14.3" fill="#1e1e1e">Moros</text><rect x="1163.9" y="443.5" width="81.39999999999986" height="62.60000000000002" rx="0" fill="#eef4d7" stroke="#4a4a4a" stroke-width="1.2" /><text x="1204.6" y="471" text-anchor="middle" font-family="Liberation Sans" font-size="14.3" fill="#1e1e1e">Xander</text><text x="1204.6" y="486.5" text-anchor="middle" font-family="Liberation Sans" font-size="14.3" fill="#1e1e1e">Angelos</text><rect x="1291.0" y="443.5" width="90.90000000000009" height="62.60000000000002" rx="12" fill="#e3f4d7" stroke="#4a4a4a" stroke-width="1.2" /><text x="1336.45" y="471" text-anchor="middle" font-family="Liberation Sans" font-size="14.3" fill="#1e1e1e">Cassadee</text><text x="1336.45" y="486.5" text-anchor="middle" font-family="Liberation Sans" font-size="14.3" fill="#1e1e1e">Doran</text><rect x="1401.7" y="443.5" width="104.39999999999986" height="62.60000000000002" rx="0" fill="#eef4d7" stroke="#4a4a4a" stroke-width="1.2" /><text x="1453.9" y="471" text-anchor="middle" font-family="Liberation Sans" font-size="14.3" fill="#1e1e1e">Montgomery</text><text x="1453.9" y="486.5" text-anchor="middle" font-family="Liberation Sans" font-size="14.3" fill="#1e1e1e">Baran</text><rect x="1551.1" y="443.5" width="77.10000000000014" height="62.60000000000002" rx="12" fill="#e3f4d7" stroke="#4a4a4a" stroke-width="1.2" /><text x="1589.65" y="471" text-anchor="middle" font-family="Liberation Sans" font-size="14.3" fill="#1e1e1e">Isabella</text><text x="1589.65" y="486.5" text-anchor="middle" font-family="Liberation Sans" font-size="14.3" fill="#1e1e1e">Appleby</text><rect x="1229.3" y="543.5" width="76.70000000000005" height="62.60000000000002" rx="12" fill="#e3f4d7" stroke="#4a4a4a" stroke-width="1.2" /><text x="1267.65" y="571" text-anchor="middle" font-family="Liberation Sans" font-size="14.3" fill="#1e1e1e">Chloé</text><text x="1267.65" y="586.5" text-anchor="middle" font-family="Liberation Sans" font-size="14.3" fill="#1e1e1e">Angelos</text><rect x="1491.8" y="543.5" width="73.10000000000014" height="62.60000000000002" rx="0" fill="#eef4d7" stroke="#4a4a4a" stroke-width="1.2" /><text x="1528.35" y="571" text-anchor="middle" font-family="Liberation Sans" font-size="14.3" fill="#1e1e1e">Sylvan</text><text x="1528.35" y="586.5" text-anchor="middle" font-family="Liberation Sans" font-size="14.3" fill="#1e1e1e">Baran</text></svg>
<div class="a" style="left:15px;top:850px;width:402px;height:410px;background:#2a2e33;border-radius:3px 3px 0 0"></div>
<div class="a" style="left:15px;top:850px;width:402px;height:26px;background:#454545;border-radius:3px 3px 0 0"></div>
<div class="t" style="left:164.4px;top:855.85px;font-size:14px;color:#9d9d9d;font-family:'Liberation Sans',sans-serif;transform:scaleX(0.9350);transform-origin:0 0;">KeenWrite - 1</div>
<svg style="left:18px;top:850px" width="23" height="21"><defs><linearGradient id="rg18" x1="0" y1="0" x2="1" y2="1"><stop offset="0" stop-color="#4fb3e3"/><stop offset="1" stop-color="#1a6f9f"/></linearGradient></defs><polygon points="6.30,15.04 4.66,19.21 8.24,17.65 9.21,17.95" fill="#f0b56a"/><circle cx="7.95" cy="16.00" r="2.23" fill="#f07563"/><polygon points="19.88,3.88 13.87,5.82 9.89,11.25 8.34,12.90 10.28,13.00 11.35,15.62 11.45,13.87 12.51,13.97 18.04,9.89" fill="url(#rg18)"/><circle cx="16.68" cy="7.37" r="0.68" fill="#1b2a33"/></svg>
<svg style="left:370px;top:856px" width="40" height="14"><path d="M2 7.3L7.1 2L12.2 7.3Z" fill="#929292"/><rect x="5.9" y="5.8" width="2.5" height="5" fill="#929292"/><path d="M27.3 3.3L33.8 9.9M33.8 3.3L27.3 9.9" stroke="#929292" stroke-width="2.5"/></svg>
<div class="a" style="left:17px;top:876px;width:399px;height:32px;background:linear-gradient(#575e65,#656c73);border-bottom:1px solid #393e43"></div>
<div class="a" style="left:22px;top:882px;width:59px;height:26px;background:#4f565d;border:1px solid #353a3f;border-bottom:none;border-radius:5px 5px 0 0"></div>
<div class="t" style="left:29px;top:888.82px;font-size:13.8px;color:#e8e8e8;font-family:'Liberation Sans',sans-serif;letter-spacing:0.33px;">Files</div>
<svg style="left:61px;top:891px" width="12" height="12"><path d="M2 2L10 10M10 2L2 10" stroke="#f2f2f2" stroke-width="1.7"/></svg>
<div class="a" style="left:17px;top:908px;width:399px;height:27px;background:#555c63"></div>
<div class="a" style="left:17px;top:909px;width:28px;height:25px;background:linear-gradient(#40464c,#353a40);border:1px solid #2b2f34;border-radius:3px"></div>
<svg style="left:24px;top:914px" width="14" height="15"><path d="M1.3 1.3H8.5L12 4.8V13.6H1.3Z" stroke="#eee" stroke-width="1.2" fill="none"/><path d="M8.3 1.3V5H12" stroke="#eee" stroke-width="1" fill="none"/></svg>
<div class="a" style="left:57px;top:909px;width:359px;height:25px;background:#5a6168;border:1px solid #4b5158;border-radius:3px 0 0 3px"></div>
<div class="t" style="left:65px;top:916.12px;font-size:13.8px;color:#e8e8e8;font-family:'Liberation Sans',sans-serif;transform:scaleX(1.0887);transform-origin:0 0;">/home/author/dev/writing</div>
<div class="a" style="left:17px;top:935px;width:399px;height:27px;background:#2a2e33"></div>
<div class="a" style="left:18px;top:936px;width:50px;height:25px;background:linear-gradient(#42484e,#363b41);border:1px solid #2c3035"></div>
<div class="t" style="left:22px;top:943.82px;font-size:13.8px;color:#e8e8e8;font-family:'Liberation Sans',sans-serif;letter-spacing:0.33px;">Type</div>
<div class="a" style="left:69px;top:936px;width:75px;height:25px;background:linear-gradient(#42484e,#363b41);border:1px solid #2c3035"></div>
<div class="t" style="left:73px;top:943.82px;font-size:13.8px;color:#e8e8e8;font-family:'Liberation Sans',sans-serif;letter-spacing:0.33px;">Name</div>
<div class="a" style="left:145px;top:936px;width:72px;height:25px;background:linear-gradient(#42484e,#363b41);border:1px solid #2c3035"></div>
<div class="t" style="left:148.5px;top:943.82px;font-size:13.8px;color:#e8e8e8;font-family:'Liberation Sans',sans-serif;letter-spacing:0.33px;">Size</div>
<div class="a" style="left:218px;top:936px;width:106px;height:25px;background:linear-gradient(#42484e,#363b41);border:1px solid #2c3035"></div>
<div class="t" style="left:221.5px;top:943.82px;font-size:13.8px;color:#e8e8e8;font-family:'Liberation Sans',sans-serif;letter-spacing:0.33px;">Date</div>
<div class="a" style="left:325px;top:936px;width:75px;height:25px;background:linear-gradient(#42484e,#363b41);border:1px solid #2c3035"></div>
<div class="t" style="left:328.5px;top:943.82px;font-size:13.8px;color:#e8e8e8;font-family:'Liberation Sans',sans-serif;letter-spacing:0.33px;">Modified</div>
<div class="a" style="left:401px;top:936px;width:14px;height:25px;background:linear-gradient(#42484e,#363b41);border:1px solid #2c3035"></div>
<svg style="left:125px;top:943px" width="12" height="10"><path d="M6 1L11 9H1Z" fill="#f2f2f2"/></svg>
<div class="a" style="left:17px;top:962px;width:384px;height:280px;overflow:hidden;background:#474d53">
<div class="a" style="left:0px;top:59px;width:384px;height:1px;background:#5a6066"></div>
<div class="t" style="left:55.400000000000006px;top:23.32px;font-size:13.8px;color:#e8e8e8;font-family:'Liberation Sans',sans-serif;letter-spacing:0.33px;">..</div>
<div class="t" style="left:129px;top:23.32px;font-size:13.8px;color:#e8e8e8;font-family:'Liberation Sans',sans-serif;letter-spacing:0.33px;">4096</div>
<div class="t" style="left:200px;top:23.32px;font-size:13.8px;color:#e8e8e8;font-family:'Liberation Sans',sans-serif;letter-spacing:0.33px;">2021-Feb.-16</div>
<div class="t" style="left:305.6px;top:23.32px;font-size:13.8px;color:#e8e8e8;font-family:'Liberation Sans',sans-serif;letter-spacing:0.33px;">17:28:55</div>
<svg style="left:5px;top:6px" width="47" height="47"><path d="M0 3Q0 0 3 0H21Q23 0 23 2V7H46V46H3Q0 46 0 43Z" fill="#e9b91a"/><path d="M0 15H46V46H3Q0 46 0 43Z" fill="#efca4c"/><path d="M26 23L33 31H28.7V38H23.3V31H19Z" fill="#ffffff"/></svg>
<div class="a" style="left:0px;top:119px;width:384px;height:1px;background:#5a6066"></div>
<div class="t" style="left:55.400000000000006px;top:83.32px;font-size:13.8px;color:#e8e8e8;font-family:'Liberation Sans',sans-serif;letter-spacing:0.33px;">01.Rmd</div>
<div class="t" style="left:129px;top:83.32px;font-size:13.8px;color:#e8e8e8;font-family:'Liberation Sans',sans-serif;letter-spacing:0.33px;">6287</div>
<div class="t" style="left:200px;top:83.32px;font-size:13.8px;color:#e8e8e8;font-family:'Liberation Sans',sans-serif;letter-spacing:0.33px;">2021-Jan.-30</div>
<div class="t" style="left:305.6px;top:83.32px;font-size:13.8px;color:#e8e8e8;font-family:'Liberation Sans',sans-serif;letter-spacing:0.33px;">23:56:45</div>
<svg style="left:11px;top:63px" width="40" height="52"><path d="M0 1.2Q0 0 1.2 0H26.6V14.7H39.3V50.6Q39.3 51.8 38.1 51.8H1.2Q0 51.8 0 50.6Z" fill="#9b9b9b"/><path d="M28.6 1.5V13H38.8Z" fill="#9b9b9b"/><text x="3.7" y="10.9" font-family="Liberation Sans" font-weight="bold" font-size="10.2" fill="#ffffff" textLength="20.5" lengthAdjust="spacingAndGlyphs">RMD</text><rect x="3.7" y="21.8" width="32.3" height="27.1" fill="#ffffff"/><ellipse cx="15.4" cy="30.5" rx="7.6" ry="4.8" fill="none" stroke="#b8b8b8" stroke-width="2"/><text x="13.6" y="37.7" font-family="Liberation Sans" font-weight="bold" font-size="13" fill="#1a5fc4" textLength="9.3" lengthAdjust="spacingAndGlyphs">R</text><text x="15.9" y="45.9" font-family="Liberation Sans" font-weight="bold" font-size="9" fill="#8c8c8c" textLength="9" lengthAdjust="spacingAndGlyphs">M</text><path d="M29.8 38.8V45.6M27.1 42.7L29.8 45.7L32.5 42.7" stroke="#8c8c8c" stroke-width="1.5" fill="none"/></svg>
<div class="a" style="left:0px;top:179px;width:384px;height:1px;background:#5a6066"></div>
<div class="t" style="left:55.400000000000006px;top:143.32px;font-size:13.8px;color:#e8e8e8;font-family:'Liberation Sans',sans-serif;letter-spacing:0.33px;">02.Rmd</div>
<div class="t" style="left:129px;top:143.32px;font-size:13.8px;color:#e8e8e8;font-family:'Liberation Sans',sans-serif;letter-spacing:0.33px;">14796</div>
<div class="t" style="left:200px;top:143.32px;font-size:13.8px;color:#e8e8e8;font-family:'Liberation Sans',sans-serif;letter-spacing:0.33px;">2021-Jan.-05</div>
<div class="t" style="left:305.6px;top:143.32px;font-size:13.8px;color:#e8e8e8;font-family:'Liberation Sans',sans-serif;letter-spacing:0.33px;">20:55:25</div>
<svg style="left:11px;top:123px" width="40" height="52"><path d="M0 1.2Q0 0 1.2 0H26.6V14.7H39.3V50.6Q39.3 51.8 38.1 51.8H1.2Q0 51.8 0 50.6Z" fill="#9b9b9b"/><path d="M28.6 1.5V13H38.8Z" fill="#9b9b9b"/><text x="3.7" y="10.9" font-family="Liberation Sans" font-weight="bold" font-size="10.2" fill="#ffffff" textLength="20.5" lengthAdjust="spacingAndGlyphs">RMD</text><rect x="3.7" y="21.8" width="32.3" height="27.1" fill="#ffffff"/><ellipse cx="15.4" cy="30.5" rx="7.6" ry="4.8" fill="none" stroke="#b8b8b8" stroke-width="2"/><text x="13.6" y="37.7" font-family="Liberation Sans" font-weight="bold" font-size="13" fill="#1a5fc4" textLength="9.3" lengthAdjust="spacingAndGlyphs">R</text><text x="15.9" y="45.9" font-family="Liberation Sans" font-weight="bold" font-size="9" fill="#8c8c8c" textLength="9" lengthAdjust="spacingAndGlyphs">M</text><path d="M29.8 38.8V45.6M27.1 42.7L29.8 45.7L32.5 42.7" stroke="#8c8c8c" stroke-width="1.5" fill="none"/></svg>
<div class="a" style="left:0px;top:239px;width:384px;height:1px;background:#5a6066"></div>
<div class="t" style="left:55.400000000000006px;top:203.32px;font-size:13.8px;color:#e8e8e8;font-family:'Liberation Sans',sans-serif;letter-spacing:0.33px;">03.Rmd</div>
<div class="t" style="left:129px;top:203.32px;font-size:13.8px;color:#e8e8e8;font-family:'Liberation Sans',sans-serif;letter-spacing:0.33px;">20939</div>
<div class="t" style="left:200px;top:203.32px;font-size:13.8px;color:#e8e8e8;font-family:'Liberation Sans',sans-serif;letter-spacing:0.33px;">2021-Jan.-05</div>
<div class="t" style="left:305.6px;top:203.32px;font-size:13.8px;color:#e8e8e8;font-family:'Liberation Sans',sans-serif;letter-spacing:0.33px;">20:55:41</div>
<svg style="left:11px;top:183px" width="40" height="52"><path d="M0 1.2Q0 0 1.2 0H26.6V14.7H39.3V50.6Q39.3 51.8 38.1 51.8H1.2Q0 51.8 0 50.6Z" fill="#9b9b9b"/><path d="M28.6 1.5V13H38.8Z" fill="#9b9b9b"/><text x="3.7" y="10.9" font-family="Liberation Sans" font-weight="bold" font-size="10.2" fill="#ffffff" textLength="20.5" lengthAdjust="spacingAndGlyphs">RMD</text><rect x="3.7" y="21.8" width="32.3" height="27.1" fill="#ffffff"/><ellipse cx="15.4" cy="30.5" rx="7.6" ry="4.8" fill="none" stroke="#b8b8b8" stroke-width="2"/><text x="13.6" y="37.7" font-family="Liberation Sans" font-weight="bold" font-size="13" fill="#1a5fc4" textLength="9.3" lengthAdjust="spacingAndGlyphs">R</text><text x="15.9" y="45.9" font-family="Liberation Sans" font-weight="bold" font-size="9" fill="#8c8c8c" textLength="9" lengthAdjust="spacingAndGlyphs">M</text><path d="M29.8 38.8V45.6M27.1 42.7L29.8 45.7L32.5 42.7" stroke="#8c8c8c" stroke-width="1.5" fill="none"/></svg>
<div class="a" style="left:0px;top:299px;width:384px;height:1px;background:#5a6066"></div>
<div class="t" style="left:55.400000000000006px;top:263.32px;font-size:13.8px;color:#e8e8e8;font-family:'Liberation Sans',sans-serif;letter-spacing:0.33px;">04.Rmd</div>
<div class="t" style="left:129px;top:263.32px;font-size:13.8px;color:#e8e8e8;font-family:'Liberation Sans',sans-serif;letter-spacing:0.33px;">26127</div>
<div class="t" style="left:200px;top:263.32px;font-size:13.8px;color:#e8e8e8;font-family:'Liberation Sans',sans-serif;letter-spacing:0.33px;">2021-Jan.-05</div>
<div class="t" style="left:305.6px;top:263.32px;font-size:13.8px;color:#e8e8e8;font-family:'Liberation Sans',sans-serif;letter-spacing:0.33px;">20:55:49</div>
<svg style="left:11px;top:243px" width="40" height="52"><path d="M0 1.2Q0 0 1.2 0H26.6V14.7H39.3V50.6Q39.3 51.8 38.1 51.8H1.2Q0 51.8 0 50.6Z" fill="#9b9b9b"/><path d="M28.6 1.5V13H38.8Z" fill="#9b9b9b"/><text x="3.7" y="10.9" font-family="Liberation Sans" font-weight="bold" font-size="10.2" fill="#ffffff" textLength="20.5" lengthAdjust="spacingAndGlyphs">RMD</text><rect x="3.7" y="21.8" width="32.3" height="27.1" fill="#ffffff"/><ellipse cx="15.4" cy="30.5" rx="7.6" ry="4.8" fill="none" stroke="#b8b8b8" stroke-width="2"/><text x="13.6" y="37.7" font-family="Liberation Sans" font-weight="bold" font-size="13" fill="#1a5fc4" textLength="9.3" lengthAdjust="spacingAndGlyphs">R</text><text x="15.9" y="45.9" font-family="Liberation Sans" font-weight="bold" font-size="9" fill="#8c8c8c" textLength="9" lengthAdjust="spacingAndGlyphs">M</text><path d="M29.8 38.8V45.6M27.1 42.7L29.8 45.7L32.5 42.7" stroke="#8c8c8c" stroke-width="1.5" fill="none"/></svg>
</div>
<div class="a" style="left:400px;top:962px;width:15px;height:280px;background:#676e75"></div>
<svg style="left:402px;top:964px" width="13" height="9"><path d="M2 7L6.5 2.5L11 7" stroke="#2a2e33" stroke-width="1.4" fill="none"/></svg>
<div class="a" style="left:401.5px;top:976px;width:12px;height:48px;background:linear-gradient(90deg,#4a5056,#3b4046);border:1px solid #33383d;border-radius:3px"></div>
<svg style="left:402px;top:1229px" width="13" height="9"><path d="M2 2L6.5 6.5L11 2" stroke="#2a2e33" stroke-width="1.4" fill="none"/></svg>
<div class="a" style="left:17px;top:1242px;width:398px;height:16px;background:#676e75"></div>
<svg style="left:19px;top:1244px" width="9" height="13"><path d="M7 2L2.5 6.5L7 11" stroke="#2a2e33" stroke-width="1.4" fill="none"/></svg>
<div class="a" style="left:32px;top:1244px;width:356px;height:12px;background:linear-gradient(#4a5056,#3b4046);border:1px solid #33383d;border-radius:4px"></div>
<svg style="left:388px;top:1244px" width="9" height="13"><path d="M2 2L6.5 6.5L2 11" stroke="#2a2e33" stroke-width="1.4" fill="none"/></svg>
<div class="a" style="left:400px;top:1242px;width:15px;height:16px;background:#3c4147"></div>
<svg style="left:0;top:0" width="1690" height="1275"><ellipse cx="212.8" cy="301.8" rx="31.4" ry="14" fill="rgba(240,140,140,0.18)" stroke="#f48a8c" stroke-width="1.8"/><path d="M181.4 302C112 304 44 362 39 500C37 585 72 632 116 648" stroke="#f48a8c" stroke-width="1.6" fill="none"/><path d="M122.5 649.5L96.4 648.9L104.9 643.8L101.0 634.6Z" fill="#f48a8c"/><path d="M244.2 301.5C500 303 800 335 949 419" stroke="#f48a8c" stroke-width="1.6" fill="none"/><path d="M949 419C1010 470 1060 520 1120 540C1160 555 1200 562 1235 564" stroke="#f48a8c" stroke-width="1.6" fill="none"/><path d="M1247.6 564.7L1222.1 570.4L1229.1 563.4L1223.2 555.5Z" fill="#f48a8c"/><path d="M949 419C975 450 1000 520 1025 638" stroke="#f48a8c" stroke-width="1.6" fill="none"/><path d="M1026.3 649.3L1013.8 626.4L1022.5 631.2L1028.4 623.3Z" fill="#f48a8c"/><path d="M949.5 419.5C960 440 952 490 933 540C922 570 920 600 931 627C940 650 955 670 972 688" stroke="#f48a8c" stroke-width="1.6" fill="none"/><path d="M982.7 698.7L961.1 684.0L971.1 684.3L972.8 674.6Z" fill="#f48a8c"/><path d="M931 627C934 780 945 930 972 978" stroke="#f48a8c" stroke-width="1.6" fill="none"/><path d="M981.6 992.3L963.2 973.7L972.9 976.0L976.5 966.7Z" fill="#f48a8c"/></svg>
</body></html>
